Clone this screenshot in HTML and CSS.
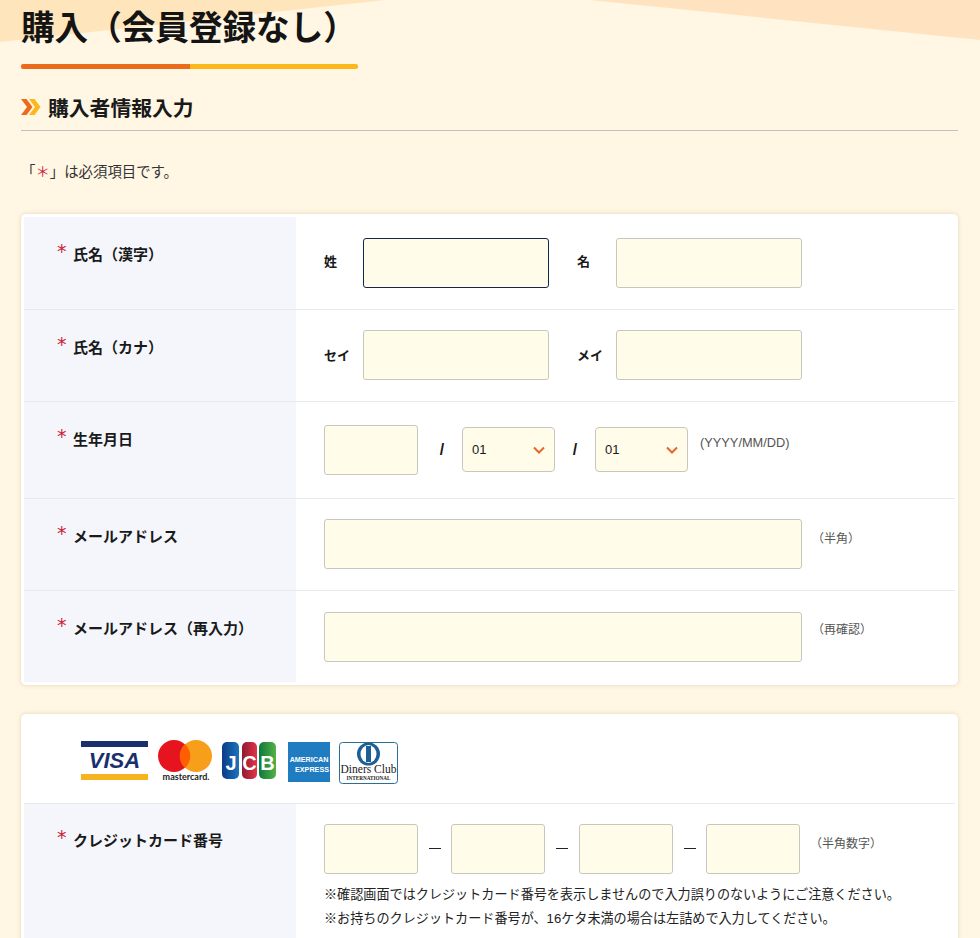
FILE: index.html
```html
<!DOCTYPE html>
<html lang="ja">
<head>
<meta charset="utf-8">
<title>購入（会員登録なし）</title>
<link rel="stylesheet" href="styles.css">
</head>
<body>
<svg class="decor" width="980" height="44" viewBox="0 0 980 44" aria-hidden="true">
  <polygon points="0,0 385,0 0,42" fill="#ffe5bc"/>
  <polygon points="590,0 980,0 980,40" fill="#ffe3c1"/>
</svg>
<main class="page">
  <h1 class="title">購入（会員登録なし）</h1>
  <div class="title-bar"><span class="bar-a"></span><span class="bar-b"></span></div>
  <h2 class="section">
    <svg class="chev" width="20" height="16" viewBox="0 0 20 16" aria-hidden="true">
      <path d="M0 0h5.5l6 8-6 8H0l6-8z" fill="#ec6a1c"/>
      <path d="M8 0h5.5l6 8-6 8H8l6-8z" fill="#fcb71b"/>
    </svg>
    購入者情報入力
  </h2>
  <p class="note">「<span class="red">＊</span>」は必須項目です。</p>

  <section class="card">
    <div class="row r1">
      <div class="th"><span class="star">*</span>氏名（漢字）</div>
      <div class="td">
        <span class="lab">姓</span><input class="inp w186 focus">
        <span class="lab lab2">名</span><input class="inp w186">
      </div>
    </div>
    <div class="row r2">
      <div class="th"><span class="star">*</span>氏名（カナ）</div>
      <div class="td">
        <span class="lab">セイ</span><input class="inp w186">
        <span class="lab lab2">メイ</span><input class="inp w186">
      </div>
    </div>
    <div class="row r3">
      <div class="th"><span class="star">*</span>生年月日</div>
      <div class="td">
        <input class="inp w94">
        <span class="slash s1">/</span>
        <div class="sel">01<svg width="12" height="8" viewBox="0 0 12 8"><path d="M1 1.5l5 5 5-5" fill="none" stroke="#e8662a" stroke-width="2"/></svg></div>
        <span class="slash s2">/</span>
        <div class="sel">01<svg width="12" height="8" viewBox="0 0 12 8"><path d="M1 1.5l5 5 5-5" fill="none" stroke="#e8662a" stroke-width="2"/></svg></div>
        <span class="hint hint-date">(YYYY/MM/DD)</span>
      </div>
    </div>
    <div class="row r4">
      <div class="th"><span class="star">*</span>メールアドレス</div>
      <div class="td"><input class="inp w478"><span class="hint hint-mail">（半角）</span></div>
    </div>
    <div class="row r5">
      <div class="th"><span class="star">*</span>メールアドレス（再入力）</div>
      <div class="td"><input class="inp w478"><span class="hint hint-again">（再確認）</span></div>
    </div>
  </section>

  <section class="card card2">
    <div class="brands">
      <svg class="brand" width="67" height="41" viewBox="0 0 67 41">
        <rect x="0" y="1" width="67" height="6" fill="#1a2f6e"/>
        <rect x="0" y="34" width="67" height="6" fill="#f6b51e"/>
        <text x="33.500" y="28" class="t-visa">VISA</text>
      </svg>
      <svg class="brand" width="56" height="42" viewBox="0 0 56 42">
        <circle cx="17" cy="16" r="16" fill="#e5141f"/>
        <circle cx="39" cy="16" r="16" fill="#f79e1b"/>
        <path d="M28 4.100a16 16 0 0 1 0 23.800a16 16 0 0 1 0-23.800z" fill="#ff5f00"/>
        <text x="29" y="40" class="t-mc">mastercard.</text>
      </svg>
      <svg class="brand" width="57" height="41" viewBox="0 0 57 41">
        <defs>
          <linearGradient id="jb" x1="0" x2="1" y1="0" y2="0"><stop offset="0" stop-color="#0c3a86"/><stop offset="1" stop-color="#1b75bc"/></linearGradient>
          <linearGradient id="jr" x1="0" x2="1" y1="0" y2="0"><stop offset="0" stop-color="#8e1b2f"/><stop offset="1" stop-color="#e2344a"/></linearGradient>
          <linearGradient id="jg" x1="0" x2="1" y1="0" y2="0"><stop offset="0" stop-color="#0b7a3b"/><stop offset="1" stop-color="#55b146"/></linearGradient>
        </defs>
        <rect x="0" y="2" width="17" height="37" rx="5" fill="url(#jb)"/>
        <rect x="20" y="2" width="15" height="37" rx="5" fill="url(#jr)"/>
        <rect x="37" y="2" width="17" height="37" rx="5" fill="url(#jg)"/>
        <text x="9" y="30" class="t-jcb">J</text>
        <text x="27.500" y="30" class="t-jcb">C</text>
        <text x="45.500" y="30" class="t-jcb">B</text>
      </svg>
      <svg class="brand" width="42" height="42" viewBox="0 0 42 42">
        <rect y="2" width="42" height="40" fill="#1f7cc1"/>
        <text x="21" y="21.500" class="t-amex">AMERICAN</text>
        <text x="41" y="31.500" class="t-amex t-end">EXPRESS</text>
      </svg>
      <svg class="brand" width="59" height="44" viewBox="0 0 59 44">
        <rect x="0.500" y="2.500" width="58" height="41" rx="3" fill="#fff" stroke="#2c6f96"/>
        <circle cx="29.500" cy="14" r="11.500" fill="#1c5f96"/>
        <ellipse cx="29.500" cy="14" rx="8" ry="9" fill="#fff"/>
        <rect x="27" y="6" width="5" height="16" fill="#1c5f96"/>
        <text x="29.500" y="33" class="t-din">Diners Club</text>
        <text x="29.500" y="39.500" class="t-din2">INTERNATIONAL</text>
      </svg>
    </div>
    <div class="row r6">
      <div class="th"><span class="star">*</span>クレジットカード番号</div>
      <div class="td td-col">
        <div class="cc">
          <input class="inp w94"><span class="dash"></span>
          <input class="inp w94"><span class="dash dash-wide"></span>
          <input class="inp w94"><span class="dash"></span>
          <input class="inp w94">
          <span class="hint hint-cc">（半角数字）</span>
        </div>
        <p class="fine">※確認画面ではクレジットカード番号を表示しませんので入力誤りのないようにご注意ください。</p>
        <p class="fine">※お持ちのクレジットカード番号が、16ケタ未満の場合は左詰めで入力してください。</p>
      </div>
    </div>
  </section>
</main>
</body>
</html>
```
FILE: styles.css
```css
* { box-sizing: border-box; }
html, body { margin: 0; padding: 0; height: 938px; overflow: hidden; }
body {
  position: relative;
  background: #fff6e3;
  color: #1a1a1a;
  font-family: "Liberation Sans", "Noto Sans CJK JP", sans-serif;
}
.decor { position: absolute; left: 0; top: 0; }
.page { position: relative; margin-left: 21px; width: 937px; }
.title {
  margin: 0;
  padding-top: 5px;
  font-size: 33.6px;
  line-height: 47px;
  font-weight: 700;
  color: #141414;
}
.title-bar { display: flex; width: 337px; height: 5px; margin-top: 12px; border-radius: 2px; overflow: hidden; }
.bar-a { width: 169px; background: #ec6a1c; }
.bar-b { flex: 1; background: #fcb71b; }
.section {
  display: flex;
  align-items: center;
  gap: 7px;
  margin: 21px 0 0;
  height: 41px;
  padding-bottom: 6px;
  border-bottom: 1px solid #c4bebd;
  font-size: 20.8px;
  font-weight: 700;
  color: #1a1a1a;
}
.chev { flex: none; }
.note { margin: 29px 0 0; font-size: 14.4px; line-height: 24px; color: #333; height: 24px; }
.red { color: #d4203a; }
.card {
  margin-top: 30px;
  padding: 3px;
  background: #fff;
  border-radius: 5px;
  box-shadow: 0 0 4px rgba(160, 140, 100, .3);
}
.card2 { margin-top: 29px; padding-bottom: 0; }
.row { display: grid; grid-template-columns: 272px 1fr; border-bottom: 1px solid #e8e8ee; }
.r1 { height: 93px; }
.r2 { height: 92px; }
.r3 { height: 97px; }
.r4 { height: 92px; }
.r5 { height: 91px; border-bottom: 0; }
.r6 { height: 140px; border-bottom: 0; }
.th {
  display: flex;
  align-items: flex-start;
  background: #f4f6fb;
  padding: 27px 0 0 33px;
  font-size: 15px;
  line-height: 22px;
  font-weight: 700;
  color: #1a1a1a;
  white-space: nowrap;
}
.r6 .th { padding-top: 26px; }
.star {
  width: 16px;
  margin-top: -4px;
  font-family: "DejaVu Sans", sans-serif;
  font-size: 19px;
  line-height: 22px;
  font-weight: 400;
  color: #cc1f36;
}
.td { display: flex; align-items: center; padding: 0 0 0 28px; }
.r1 .td { padding-bottom: 1px; }
.r2 .td { padding-bottom: 1px; }
.r3 .td { padding-bottom: 1px; }
.r4 .td { padding-bottom: 1px; }
.r5 .td { padding-top: 1px; }
.inp {
  display: block;
  height: 50px;
  padding: 0;
  background: #fffcea;
  border: 1px solid #c9c6bd;
  border-radius: 3px;
  outline: none;
}
.w186 { width: 186px; }
.w94 { width: 94px; }
.w478 { width: 478px; }
.focus { border-color: #14264f; }
.lab { width: 39px; margin-bottom: 2px; font-size: 13px; font-weight: 700; color: #1a1a1a; white-space: nowrap; }
.r1 .lab { margin-bottom: 5px; }
.lab2 { margin-left: 28px; }
.slash { font-size: 16px; font-weight: 700; text-align: center; }
.s1 { width: 44px; padding-left: 4px; }
.s2 { width: 40px; }
.sel {
  display: flex;
  align-items: center;
  justify-content: space-between;
  width: 93px;
  height: 45px;
  padding: 0 9px;
  background: #fffcea;
  border: 1px solid #c9c6bd;
  border-radius: 4px;
  font-size: 13px;
  color: #1a1a1a;
}
.hint { font-size: 12px; color: #555; white-space: nowrap; }
.hint-date { margin: -15px 0 0 12px; font-size: 12.8px; }
.hint-mail { margin: -14px 0 0 10px; }
.hint-again { margin: -18px 0 0 10px; }
.hint-cc { margin: -14px 0 0 10px; }
.brands { display: flex; align-items: flex-start; gap: 9px; padding: 23px 0 0 57px; height: 87px; border-bottom: 1px solid #e8e8ee; }
.brand { display: block; flex: none; }
.t-visa { font: italic 700 22px "Liberation Sans", sans-serif; fill: #1a2f6e; text-anchor: middle; }
.t-mc { font: 700 9px "Lato", sans-serif; fill: #222; text-anchor: middle; }
.t-jcb { font: 700 20px "Liberation Sans", sans-serif; fill: #fff; text-anchor: middle; }
.t-amex { font: 700 7.200px "Liberation Sans", sans-serif; fill: #fff; text-anchor: middle; }
.t-end { text-anchor: end; }
.t-din { font: 400 11.500px "Liberation Serif", serif; fill: #222; text-anchor: middle; }
.t-din2 { font: 700 5.200px "Liberation Serif", serif; fill: #222; text-anchor: middle; }
.td-col { display: block; padding-top: 20px; }
.cc { display: flex; align-items: center; }
.dash { flex: none; width: 12px; height: 1px; margin: 0 10px 0 11px; background: #222; transform: translateY(-1px); }
.dash-wide { margin-right: 11px; }
.fine { margin: 0; font-size: 13.12px; line-height: 24px; color: #222; white-space: nowrap; }
.cc + .fine { margin-top: 9px; }
```
